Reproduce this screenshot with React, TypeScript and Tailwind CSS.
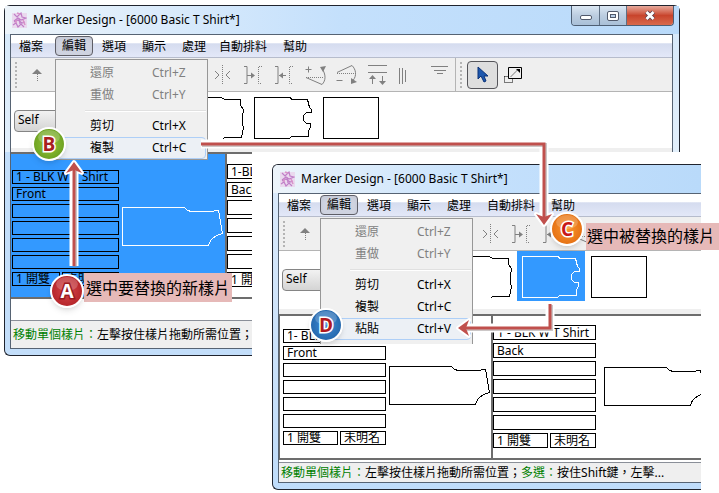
import type { ReactNode } from 'react';

const toolIcons: ReactNode[] = [
  <>
    <path d="M4 10l4 4-4 4M19 10l-4 4 4 4" />
    <path d="M11.5 4v20" strokeDasharray="1 1" />
  </>,
  <>
    <path d="M2 5.5h3v17H2M5 14.5h7" />
    <path d="M9 11.5l4 3-4 3z" fill="#808080" stroke="none" />
    <path d="M20 5.5h-3.5v17H20" strokeDasharray="1 1" />
  </>,
  <>
    <path d="M2 5.5h3v17H2M6 14.5h7" />
    <path d="M10 11.5l-4 3 4 3z" fill="#808080" stroke="none" />
    <path d="M20 5.5h-3.5v17H20" strokeDasharray="1 1" />
  </>,
  <>
    <path d="M1.5 8.5h6M4.5 5.5v6M2 16.5l16 7c4-4 4-10 0-16" />
    <path d="M2 16.5h18" strokeDasharray="1 1" />
    <path d="M16 6l6-1-3 6z" fill="#808080" stroke="none" />
  </>,
  <>
    <path d="M1.5 19.5h6M2 11.5l15-7c4 4 5 10 1 15" />
    <path d="M2 12.5h18" strokeDasharray="1 1" />
    <path d="M16 17l0 6 6-2z" fill="#808080" stroke="none" />
  </>,
  <>
    <path d="M2 4.5h19M2 11.5h19M6.5 15v8M16.5 15v8" />
    <path d="M3 18l3.5-4 3.500 4zM13 20l3.500 4 3.500-4z" fill="#808080" stroke="none" />
  </>,
  <path d="M2.5 7v16M5.5 7v16M8.5 9v12" />,
  <path d="M3 5.5h17M6 9.5h12M9 12.5h6" />,
];

const menuText = 'text-xs leading-[22px]';

function Mark() {
  return (
    <svg width="15" height="16" viewBox="0 0 15 16" className="shrink-0">
      <rect y="1" width="15" height="15" fill="#ead9ee" />
      <path d="M2 2l3 3 4-4 1 4 4 1-5 2-3-2-4 3M2 10l4-2 4 3 3-1M1 13l3-2 2 4 3-3 3 3M7 6l1 6" fill="none" stroke="#c07fc8" strokeWidth="1.200" />
      <path d="M5 1l3 1M11 8l2 5M4 8v3" stroke="#d993c9" strokeWidth="1.500" />
    </svg>
  );
}

function WindowButtons() {
  return (
    <div className="flex self-start overflow-hidden rounded-b border border-t-0 border-[#4e5f74]">
      <button aria-label="Minimize" className="flex h-[19px] w-7 items-center justify-center border-r border-[#5e6f84] bg-linear-to-b from-[#dbe7f3] via-[#bccde0] to-[#a9c0d8]">
        <span className="mt-1 h-[5px] w-3 rounded-xs border border-[#51596b] bg-white" />
      </button>
      <button aria-label="Maximize" className="flex h-[19px] w-[27px] items-center justify-center border-r border-[#5e6f84] bg-linear-to-b from-[#dbe7f3] via-[#bccde0] to-[#a9c0d8]">
        <span className="flex h-[10px] w-3 items-center justify-center rounded-xs border border-[#51596b] bg-white">
          <span className="h-1 w-1.5 border border-[#51596b] bg-[#b9cfe8]" />
        </span>
      </button>
      <button aria-label="Close" className="flex h-[19px] w-[46px] items-center justify-center bg-linear-to-b from-[#e6a99c] via-[#c8442c] to-[#d9694b]">
        <svg width="12" height="11" viewBox="0 0 12 11">
          <path d="M2.5 2l7 7M9.5 2l-7 7" stroke="#5a3f4c" strokeWidth="4.500" />
          <path d="M2.5 2l7 7M9.5 2l-7 7" stroke="#fff" strokeWidth="2.800" />
        </svg>
      </button>
    </div>
  );
}

function TitleBar({ buttons }: { buttons?: boolean }) {
  return (
    <header className="flex h-7 items-center bg-linear-to-r from-[#edf4fa] via-[#c4e0fc] to-[#b9dafa] pl-[7px]">
      <Mark />
      <h1 className="ml-1.5 grow text-xs whitespace-nowrap text-black">Marker Design - [6000 Basic T Shirt*]</h1>
      {buttons && (
        <div className="self-start pr-[5px]">
          <WindowButtons />
        </div>
      )}
    </header>
  );
}

type Entry = { label: string; keys: string; off?: boolean };

const undoEntries: Entry[] = [
  { label: '還原', keys: 'Ctrl+Z', off: true },
  { label: '重做', keys: 'Ctrl+Y', off: true },
];

function MenuEntry({ entry, active }: { entry: Entry; active: boolean }) {
  return (
    <li>
      <button
        className={`${menuText} flex h-[22px] w-full items-center rounded-sm border pl-8 text-left ${
          active ? 'border-[#aecff7] bg-[#eaf0f8]/60' : 'border-transparent'
        } ${entry.off ? 'text-[#808080]' : 'text-black'}`}
      >
        <span className="w-[62px]">{entry.label}</span>
        <span>{entry.keys}</span>
      </button>
    </li>
  );
}

function EditMenu({ entries, active, front }: { entries: Entry[]; active: string; front?: boolean }) {
  return (
    <ul
      className={`absolute top-[23px] left-px z-20 w-[153px] border border-[#979797] bg-[#f0f0f0] px-px pt-0.5 ${
        front ? 'border-b-0 pb-1' : ''
      }`}
    >
      {undoEntries.map((e) => (
        <MenuEntry key={e.label} entry={e} active={false} />
      ))}
      <li className="ml-7 flex h-[9px] items-center">
        <span className="h-0.5 w-full border-t border-[#e0e0e0] bg-white" />
      </li>
      {entries.map((e) => (
        <MenuEntry key={e.label} entry={e} active={e.label === active} />
      ))}
    </ul>
  );
}

function MenuBar({ children, front }: { children: ReactNode; front?: boolean }) {
  const item = `${menuText} h-[22px] w-10 shrink-0 text-center`;
  return (
    <nav className="flex h-[23px] border-b border-[#b6bccc] bg-linear-to-b from-white from-35% via-[#d5dcef] via-40% to-[#e3e8f8] pt-px text-black">
      <button className={item}>檔案</button>
      <div className={front ? 'relative' : 'relative ml-[3px]'}>
        <button className={`${menuText} ml-px flex h-5 w-[38px] items-center justify-center rounded border border-[#5e5e66] bg-[#cfd3e0] shadow-inner`}>編輯</button>
        {children}
      </div>
      <button className={`${item} ml-px`}>選項</button>
      <button className={item}>顯示</button>
      <button className={item}>處理</button>
      <button className={`${menuText} h-[22px] w-[58px] shrink-0 ${front ? 'ml-[3px]' : ''}`}>自動排料</button>
      <button className={`${menuText} h-[22px] w-[46px] shrink-0`}>幫助</button>
    </nav>
  );
}

function Grip() {
  return <span className="ml-1 h-[26px] w-0.5 shrink-0 border-l-2 border-dotted border-[#b4b4b4]" />;
}

function Toolbar() {
  return (
    <div className="flex h-[34px] items-center border-b border-[#b4b4b4] bg-[#efefef]">
      <Grip />
      <button aria-label="Up" className="ml-1 flex w-[31px] shrink-0 justify-center">
        <svg width="12" height="16" viewBox="0 0 12 16">
          <path d="M1 7l5-5 5 5z" fill="#808080" />
          <path d="M6.5 7v8" stroke="#808080" strokeDasharray="1 1" />
        </svg>
      </button>
      <span className="w-[155px] shrink-0" />
      {toolIcons.map((icon, i) => (
        <button key={i} aria-label={`Tool ${i + 1}`} className="flex w-[31px] shrink-0 justify-center">
          <svg width="23" height="28" viewBox="0 0 23 28" fill="none" stroke="#808080">
            {icon}
          </svg>
        </button>
      ))}
      <span className="h-full w-px shrink-0 bg-[#b4b4b4]" />
      <Grip />
      <button aria-label="Select" className="ml-[5px] flex h-7 w-[31px] shrink-0 items-center justify-center rounded border border-[#55555a] bg-[#dedede]">
        <svg width="12" height="17" viewBox="0 0 12 17">
          <path d="M1 1v12l3-3 3 6 2-1-2-5h4z" fill="#1d57ad" stroke="#0a3279" />
        </svg>
      </button>
      <button aria-label="Scale" className="ml-1.5 shrink-0">
        <svg width="19" height="18" viewBox="0 0 19 18" fill="none" stroke="#000">
          <path d="M4.5 1.5h13v11h-13z" />
          <path d="M.5 10.500h4M.5 10.500v6h8v-4" strokeDasharray="1 1" />
          <path d="M7 10.500l7-7" strokeDasharray="1.400 1.400" />
          <path d="M12 3h4v4z" fill="#000" stroke="none" />
        </svg>
      </button>
    </div>
  );
}

const thumbs = [
  { name: 'Front', d: 'M.5.5h36l3 2h16v6l3 4-1 7v7l1 4-2 10h-17l-2 2h-37z' },
  { name: 'Back', d: 'M.5.5h36l1 2h16l2 8 2 2v3h-5l-3 3v5l3 3h4v4l-2 3v6h-17l-2 2h-35z' },
  { name: 'Pocket', d: 'M.5.5h55v41h-55z' },
];

function PiecePanel({ selected, front }: { selected?: string; front?: boolean }) {
  return (
    <div className={`flex items-start bg-white ${front ? 'h-[58px]' : 'h-14'}`}>
      <label className="mt-3.5 ml-[3px] shrink-0">
        <span className="sr-only">Fabric</span>
        <select className="h-[22px] w-[130px] appearance-none rounded-sm border border-[#858585] bg-linear-to-b from-[#f2f2f2] to-[#d4d4d4] pb-0.5 pl-[3px] text-xs leading-[18px] text-black">
          <option>Self</option>
        </select>
      </label>
      <div className="ml-9 flex gap-px">
        {thumbs.map((t) => (
          <button
            key={t.name}
            aria-label={t.name}
            className={`flex h-[50px] w-[68px] shrink-0 items-center pt-px pl-[5px] ${t.name === selected ? 'bg-[#3399ff] text-white' : 'text-black'}`}
          >
            <svg width="60" height="42" fill="none" stroke="currentColor" shapeRendering="crispEdges">
              <path d={t.d} />
            </svg>
          </button>
        ))}
      </div>
    </div>
  );
}

function PieceCard({ name, tall, selected, title = '1 - BLK W T Shirt' }: { name: string; tall?: boolean; selected?: boolean; title?: string }) {
  const box = `${tall ? 'h-[15px] leading-[13px]' : 'h-3.5 leading-3'} border border-black pl-[3px] text-xs whitespace-nowrap`;
  return (
    <div className="flex shrink-0 text-black">
      <div className={`flex flex-col gap-[3px] ${selected ? 'w-[107px]' : 'w-[103px]'}`}>
        <div className={box}>{title}</div>
        <div className={box}>{name}</div>
        <div className={box} />
        <div className={box} />
        <div className={box} />
        <div className={box} />
        <div className="flex gap-0.5">
          <div className={`${box} grow`}>1 開雙</div>
          <div className={`${box} ${selected ? 'w-[57px]' : 'w-[46px]'}`}>未明名</div>
        </div>
      </div>
      <svg
        width="102"
        height="41"
        fill="none"
        shapeRendering="crispEdges"
        className={`${tall ? 'mt-[42px] ml-2' : 'mt-[37px] ml-[3px]'} shrink-0 ${selected ? 'text-white' : 'text-black'}`}
      >
        <path d="M.5.5h62q3 4 8 4h19q4-1 7-1l4 23q-12 3-14 12h-86z" stroke="currentColor" />
      </svg>
    </div>
  );
}

function BackWindow() {
  return (
    <section className="absolute top-[5px] right-[39px] left-1">
      <div className="rounded-t-md border border-b-0 border-[#20242e] bg-linear-to-b from-[#d5e8fa] to-[#e2effb]">
        <TitleBar buttons />
        <div className="mr-1.5 ml-[5px] border border-b-0 border-[#566373]">
          <MenuBar>
            <EditMenu
              active="複製"
              entries={[
                { label: '剪切', keys: 'Ctrl+X' },
                { label: '複製', keys: 'Ctrl+C' },
              ]}
            />
          </MenuBar>
          <Toolbar />
          <PiecePanel />
          <div className="h-1 bg-[#efefef]" />
        </div>
      </div>
      <div className="w-[248px] overflow-hidden rounded-bl-md border-b border-l border-[#20242e] bg-[#c3defa] pb-1.5 pl-[5px]">
        <div className="border-b border-l border-[#566373] bg-white">
          <div className="flex h-[147px] border-y-2 border-[#6d6d6d]">
            <div className="w-[214px] shrink-0 bg-[#3399ff] pt-4 pl-px">
              <PieceCard name="Front" selected />
            </div>
            <div className="border-l-2 border-[#6d6d6d] pt-2.5">
              <PieceCard name="Back" tall title="1-BLK W T Shirt" />
            </div>
          </div>
          <div className="h-[21px]" />
          <p className="h-7 border-t border-[#8a8f98] bg-[#efefef] pl-0.5 text-xs leading-7 whitespace-nowrap text-black">
            <span className="text-[#008000]">移動單個樣片：</span>左擊按住樣片拖動所需位置；
          </p>
        </div>
      </div>
    </section>
  );
}

function FrontWindow() {
  return (
    <section className="absolute top-[164px] right-[18px] left-[272px]">
      <div className="overflow-hidden rounded-l-md border border-r-0 border-[#20242e] bg-linear-to-b from-[#dceafa] to-[#bfdcfa] pb-1.5">
        <TitleBar />
        <div className="ml-[5px] border border-r-0 border-[#566373] bg-white">
          <MenuBar front>
            <EditMenu
              front
              active="粘貼"
              entries={[
                { label: '剪切', keys: 'Ctrl+X' },
                { label: '複製', keys: 'Ctrl+C' },
                { label: '粘貼', keys: 'Ctrl+V' },
              ]}
            />
          </MenuBar>
          <Toolbar />
          <PiecePanel selected="Back" front />
          <div className="h-[5px] bg-[#efefef]" />
          <div className="flex h-[146px] overflow-hidden border-y-2 border-l border-[#6d6d6d]">
            <div className="w-[211px] shrink-0 pt-[13px] pl-[3px]">
              <PieceCard name="Front" title="1- BLK W T Shirt" />
            </div>
            <div className="border-l-2 border-[#6d6d6d] pt-[9px]">
              <PieceCard name="Back" tall />
            </div>
          </div>
          <div className="h-0.5" />
          <p className="h-5 border-t border-[#8a8f98] bg-[#efefef] pl-0.5 text-xs leading-[19px] whitespace-nowrap text-black">
            <span className="text-[#008000]">移動單個樣片：</span>左擊按住樣片拖動所需位置；<span className="text-[#008000]">多選：</span>按住Shift鍵，左擊...
          </p>
        </div>
      </div>
    </section>
  );
}

const arrows = [
  { line: 'M74 266V170', head: 'M74 162l8 11-8-3-8 3z' },
  { line: 'M201 144H544V218', head: 'M544 225l8-11-8 3-8-3z' },
  { line: 'M550 304V328H466', head: 'M458 328l11-8-3 8 3 8z' },
];

function Arrows() {
  return (
    <svg className="pointer-events-none absolute top-0 left-0 z-30 h-[493px] w-[719px]" fill="none">
      {arrows.map((a) => (
        <g key={a.line}>
          <path d={a.line} stroke="#fff" strokeWidth="9" />
          <path d={a.head} stroke="#fff" strokeWidth="4" fill="#fff" strokeLinejoin="round" />
          <path d={a.line} stroke="#9a8f8f" strokeOpacity=".5" strokeWidth="4" transform="translate(1 1)" />
          <path d={a.line} stroke="#c0504d" strokeWidth="3" />
          <path d={a.head} fill="#c0504d" />
        </g>
      ))}
    </svg>
  );
}

function Badge({ letter, place, ink, rim = '#fff' }: { letter: string; place: string; ink: string; rim?: string }) {
  return (
    <div className={`absolute z-40 flex size-[34px] items-center justify-center rounded-full border-2 border-white shadow-md ${place}`}>
      <svg width="30" height="30">
        <ellipse cx="15" cy="8" rx="11" ry="7" fill="#fff" fillOpacity=".2" />
        <text x="15" y="22" textAnchor="middle" fontFamily="Open Sans, sans-serif" fontWeight="700" fontSize="19" fill={ink} stroke={rim} strokeWidth="3" paintOrder="stroke">
          {letter}
        </text>
      </svg>
    </div>
  );
}

export default function App() {
  return (
    <main className="relative min-h-screen overflow-hidden bg-white font-['Noto_Sans','Noto_Sans_CJK_TC',sans-serif]">
      <BackWindow />
      <FrontWindow />
      <Arrows />
      <p className="absolute top-[273px] left-[84px] z-30 bg-[#e6b9b8] px-0.5 pt-[3px] pb-px text-base leading-[25px] whitespace-nowrap text-black">選中要替換的新樣片</p>
      <p className="absolute top-[223px] right-0 left-[586px] z-30 bg-[#e6b9b8] pt-px pb-px pl-px text-base leading-[25px] whitespace-nowrap text-black">選中被替換的樣片</p>
      <Badge letter="A" place="top-[274px] left-[50px] bg-radial from-[#d8444a] to-[#a8181e]" ink="#fff" rim="#9a1a20" />
      <Badge letter="B" place="top-[127px] left-[32px] bg-radial from-[#96c83a] to-[#5f9418]" ink="#a82020" />
      <Badge letter="C" place="top-[212px] left-[550px] bg-radial from-[#fb962c] to-[#dd6408]" ink="#c81818" />
      <Badge letter="D" place="top-[308px] left-[309px] bg-radial from-[#3f8fd8] to-[#1c5a9e]" ink="#b01820" />
    </main>
  );
}
